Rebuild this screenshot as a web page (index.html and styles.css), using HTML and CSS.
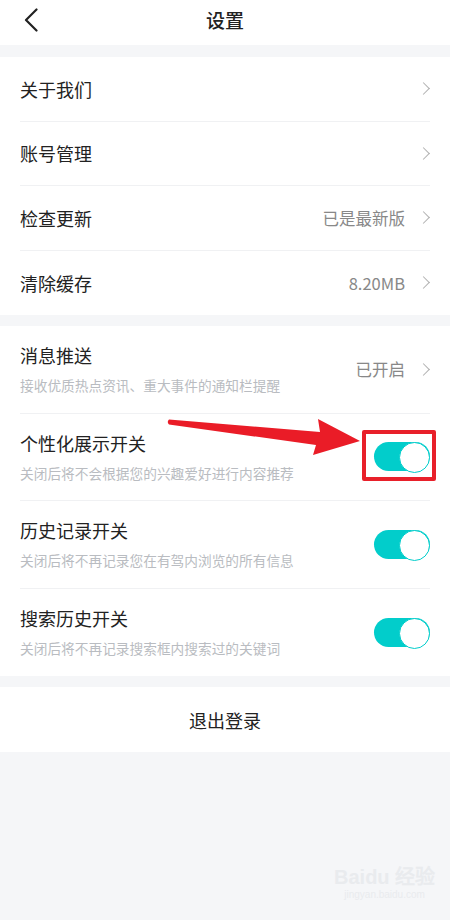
FILE: index.html
```html
<!DOCTYPE html>
<html lang="zh-CN">
<head>
  <meta charset="UTF-8">
  <meta name="viewport" content="width=device-width, initial-scale=1.0">
  <title>设置</title>
  <link rel="stylesheet" href="styles.css">
</head>
<body>
  <header class="topbar">
    <svg class="back" width="14" height="24" viewBox="0 0 14 24">
      <path d="M12.5 1.5 L2 12 L12.5 22.5" fill="none" stroke="#222" stroke-width="2.2" stroke-linecap="round" stroke-linejoin="round"/>
    </svg>
    <h1>设置</h1>
  </header>

  <section class="group">
    <div class="row">
      <span class="title">关于我们</span>
      <span class="right"><i class="chev"></i></span>
    </div>
    <div class="row">
      <span class="title">账号管理</span>
      <span class="right"><i class="chev"></i></span>
    </div>
    <div class="row">
      <span class="title">检查更新</span>
      <span class="right"><span class="value">已是最新版</span><i class="chev"></i></span>
    </div>
    <div class="row">
      <span class="title">清除缓存</span>
      <span class="right"><span class="value">8.20MB</span><i class="chev"></i></span>
    </div>
  </section>

  <section class="group annotated">
    <div class="row tall">
      <div class="text">
        <span class="title">消息推送</span>
        <span class="desc">接收优质热点资讯、重大事件的通知栏提醒</span>
      </div>
      <span class="right"><span class="value">已开启</span><i class="chev"></i></span>
    </div>
    <div class="row tall">
      <div class="text">
        <span class="title">个性化展示开关</span>
        <span class="desc">关闭后将不会根据您的兴趣爱好进行内容推荐</span>
      </div>
      <span class="switch on"><span class="mark"></span></span>
    </div>
    <div class="row tall">
      <div class="text">
        <span class="title">历史记录开关</span>
        <span class="desc">关闭后将不再记录您在有驾内浏览的所有信息</span>
      </div>
      <span class="switch on"></span>
    </div>
    <div class="row tall">
      <div class="text">
        <span class="title">搜索历史开关</span>
        <span class="desc">关闭后将不再记录搜索框内搜索过的关键词</span>
      </div>
      <span class="switch on"></span>
    </div>

    <!-- annotation arrow -->
    <svg class="arrow" width="200" height="42" viewBox="0 0 200 42">
      <path d="M3 2.5 L154 15 L152 2 L194 24 L147 38 L150 28 L3 7.5 Q0.5 5 3 2.5 Z" fill="#ea1c27"/>
    </svg>
  </section>

  <section class="logout">退出登录</section>

  <div class="watermark">Bai<b>du</b> 经验<small>jingyan.baidu.com</small></div>
</body>
</html>
```

FILE: styles.css
```css
* {
  box-sizing: border-box;
}
body {
  margin: 0;
  min-height: 920px;
  background: #f5f6f8;
  font-family: "Noto Sans CJK SC", "Noto Sans", sans-serif;
  color: #222;
}
.topbar {
  height: 45px;
  padding-bottom: 5px;
  background: #fff;
  display: flex;
  align-items: center;
  justify-content: center;
  position: relative;
}
.topbar h1 {
  margin: 0;
  font-size: 19px;
  line-height: 24px;
  font-weight: 500;
  color: #222;
}
.back {
  position: absolute;
  left: 24px;
  top: 8px;
}
.group {
  margin-top: 12px;
  background: #fff;
}
.annotated {
  margin-top: 11px;
  position: relative;
}
.row {
  margin: 0 20px;
  height: 64.5px;
  border-bottom: 1px solid #f0f1f3;
  display: flex;
  align-items: center;
  justify-content: space-between;
}
.row:last-of-type {
  border-bottom: none;
}
.row.tall {
  height: 87.5px;
}
.title {
  font-size: 18px;
  line-height: 24px;
}
.text {
  display: flex;
  flex-direction: column;
  gap: 8px;
}
.desc {
  font-size: 13.7px;
  line-height: 20px;
  color: #b9bcc1;
}
.right {
  display: flex;
  align-items: center;
}
.value {
  font-size: 16.5px;
  color: #888;
  margin-right: 14px;
}
.chev {
  display: inline-block;
  width: 9px;
  height: 9px;
  border-top: 1.3px solid #b0b0b0;
  border-right: 1.3px solid #b0b0b0;
  transform: rotate(45deg);
  margin-right: 2px;
}
.switch {
  position: relative;
  width: 56px;
  height: 29px;
  border-radius: 15px;
  background: #02cdcb;
}
.switch::after {
  content: "";
  position: absolute;
  right: 0;
  top: 0;
  width: 29px;
  height: 29px;
  border-radius: 50%;
  background: #fff;
  border: 1.5px solid #02cdcb;
}
.mark {
  position: absolute;
  left: -12px;
  top: -12px;
  width: 74px;
  height: 51px;
  border: 4px solid #e8202a;
  border-radius: 2px;
}
.arrow {
  position: absolute;
  left: 166px;
  top: 91px;
}
.logout {
  margin-top: 11px;
  height: 65px;
  background: #fff;
  display: flex;
  align-items: center;
  justify-content: center;
  font-size: 18px;
}
.watermark {
  position: absolute;
  left: 334px;
  top: 866px;
  color: #e9ebee;
  font-family: "Liberation Sans", sans-serif;
  font-size: 20px;
  font-weight: bold;
  line-height: 22px;
}
.watermark small {
  display: block;
  font-size: 10px;
  font-weight: normal;
  line-height: 14px;
  text-align: center;
}
```
